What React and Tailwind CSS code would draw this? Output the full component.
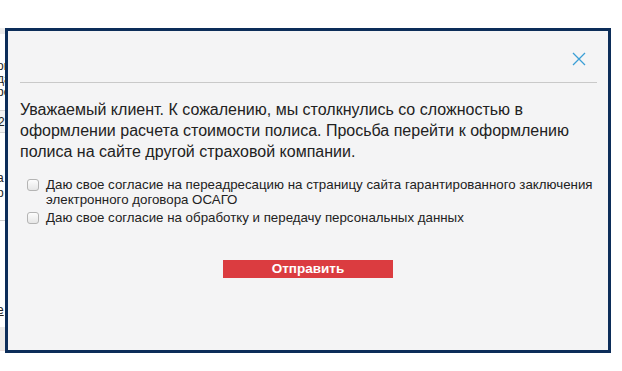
const font = { fontFamily: '"Liberation Sans", Arial, sans-serif' };

function Backdrop() {
  // page behind the modal, only its left edge and bottom are visible
  return (
    <div className="flex flex-col pt-[28px] text-[12px] text-[#222]" style={font}>
      <div className="w-[312px] h-[6px] bg-[#ececec]" />
      <div className="w-[312px] flex flex-col">
        <div className="h-[26px]" />
        <div className="leading-[13px] -ml-[3px]">ов</div>
        <div className="leading-[13px] -ml-[3px]">да</div>
        <div className="leading-[13px] -ml-[3px]">ро</div>
        <div className="h-[12px] border-b border-[#d6d6d6]" />
        <div className="h-[22px] bg-[#f4f4f4] leading-[22px] -ml-[2px] border-b border-[#d6d6d6]">2...</div>
        <div className="h-[38px]" />
        <div className="leading-[15px] -ml-[3px]">а</div>
        <div className="leading-[15px] -ml-[3px]">р</div>
        <div className="h-[20px] border-b border-[#cfcfcf]" />
        <div className="h-[82px]" />
        <div className="leading-[14px] -ml-[3px] underline">е</div>
        <div className="h-[10px]" />
        <div className="h-[24px] bg-[#ebeae9] border-b border-[#ece0de]" />
      </div>
    </div>
  );
}

function CloseIcon() {
  return (
    <svg width="14" height="14" viewBox="0 0 14 14" fill="none" stroke="#3b9fd6" strokeWidth="1.3">
      <path d="M1 1 L13 13 M13 1 L1 13" />
    </svg>
  );
}

function Box() {
  return (
    <span className="mt-[2px] w-[12px] h-[12px] shrink-0 rounded-[3px] border border-[#b4b4b4] bg-gradient-to-b from-[#fdfdfd] to-[#e6e6e6]" />
  );
}

function Modal() {
  return (
    <div
      className="absolute left-[5px] top-[28px] w-[606px] h-[325px] border-[3px] border-[#0c2d59] bg-[#f4f4f5] flex flex-col"
      style={font}
    >
      <div className="flex justify-end pt-[21px] pr-[22px] h-[51px]">
        <CloseIcon />
      </div>
      <div className="mx-[12px] mr-[11px] h-px bg-[#c9c9c9]" />
      <p className="mt-[16px] ml-[12px] mr-[20px] text-[16px] leading-[21px] text-[#222]">
        Уважаемый клиент. К сожалению, мы столкнулись со сложностью в оформлении расчета стоимости полиса. Просьба перейти к оформлению полиса на сайте другой страховой компании.
      </p>
      <div className="mt-[15px] ml-[19px] mr-[8px] flex flex-col gap-[3px] text-[13.3px] leading-[15px] text-[#222]">
        <label className="flex items-start gap-[7px]">
          <Box />
          <span>
            Даю свое согласие на переадресацию на страницу сайта гарантированного заключения электронного договора ОСАГО
          </span>
        </label>
        <label className="flex items-start gap-[7px]">
          <Box />
          <span>Даю свое согласие на обработку и передачу персональных данных</span>
        </label>
      </div>
      <div className="mt-[35px] flex justify-center">
        <button className="w-[170px] h-[18px] bg-[#db3c40] text-white text-[13.5px] font-bold leading-[18px]">
          Отправить
        </button>
      </div>
    </div>
  );
}

export default function App() {
  return (
    <div className="relative w-[622px] h-[371px] bg-white overflow-hidden">
      <Backdrop />
      <Modal />
    </div>
  );
}
